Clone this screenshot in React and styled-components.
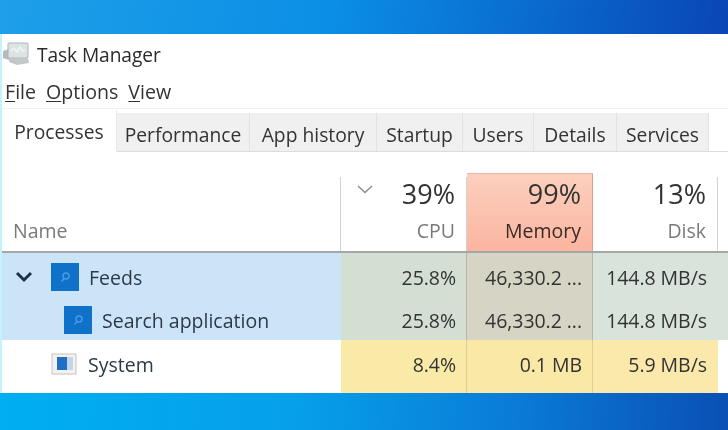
import React from 'react';
import styled, { createGlobalStyle } from 'styled-components';

const GlobalStyle = createGlobalStyle`
  html, body { margin: 0; padding: 0; background: #fff; }
  body { font-family: "Open Sans", "Noto Sans", sans-serif; }
`;

const Page = styled.div`
  width: 728px;
  height: 430px;
  overflow: hidden;
  display: flex;
  flex-direction: column;
`;

const Wallpaper = styled.div`
  height: ${p => p.$h}px;
  flex: none;
  background: ${p => p.$bg};
`;

const Win = styled.div`
  height: 359px;
  flex: none;
  display: flex;
  flex-direction: column;
  background: #fff;
  border-left: 2px solid #c4f3fb;
  box-sizing: border-box;
  color: #262626;
  filter: blur(0.35px);
`;

const TitleBar = styled.div`
  height: 40px;
  display: flex;
  align-items: center;
  gap: 6px;
  padding-left: 1px;
  font-size: 19.2px;
  letter-spacing: -0.1px;
  color: #2b2b2b;
`;

const MenuBar = styled.div`
  height: 35px;
  display: flex;
  align-items: center;
  gap: 10px;
  padding-left: 3px;
  font-size: 19.6px;
  color: #333;
  border-bottom: 1px solid #f1f1f1;
  box-sizing: border-box;
  u { text-underline-offset: 2px; text-decoration-thickness: 1px; }
`;

const TabBar = styled.div`
  height: 43px;
  flex: none;
  display: flex;
  align-items: flex-end;
  box-sizing: border-box;
  border-bottom: 1px solid #dcdcdc;
`;

const Tab = styled.div`
  width: ${p => p.$w}px;
  box-sizing: border-box;
  height: ${p => (p.$active ? 42 : 38)}px;
  display: flex;
  align-items: center;
  justify-content: center;
  font-size: 19.3px;
  padding-top: ${p => (p.$active ? 0 : 4)}px;
  background: ${p => (p.$active ? '#fff' : '#f0f0f0')};
  border-right: 1px solid ${p => (p.$active ? '#e9e9e9' : '#e2e2e2')};
  margin-bottom: ${p => (p.$active ? -1 : 0)}px;
  color: #333;
`;

const Table = styled.div`
  flex: 1;
  display: grid;
  padding-top: 21px;
  grid-template-columns: 339px 126px 126px 125px 10px;
  grid-template-rows: 80px 43px 44px 1fr;
`;

const HeadCell = styled.div`
  position: relative;
  display: flex;
  flex-direction: column;
  align-items: ${p => (p.$left ? 'flex-start' : 'flex-end')};
  justify-content: flex-end;
  box-sizing: border-box;
  padding: 0 ${p => (p.$left ? 0 : 12)}px 7px ${p => (p.$left ? 11 : 0)}px;
  border-bottom: 2px solid #a6a6a6;
  border-top: 1px solid ${p => (p.$hot ? '#e8b6a4' : 'transparent')};
  background: ${p => (p.$hot ? 'linear-gradient(#fcd0be, #fbb5a0)' : '#fff')};

  /* column divider stops short of the top, except on the hot column */
  &::after {
    content: '';
    position: absolute;
    right: 0;
    top: ${p => (p.$hot ? 0 : 3)}px;
    bottom: 0;
    width: 1px;
    background: ${p => (p.$hot ? '#d9a08e' : '#d2d2d2')};
  }
`;

const Percent = styled.div`
  font-size: 27px;
  line-height: 34px;
  color: #333;
`;

const ColName = styled.div`
  font-size: 19.5px;
  line-height: 27px;
  margin-top: 6px;
  color: ${p => (p.$hot ? '#3a2a26' : '#7a7a7a')};
`;

const SortArrow = styled.svg`
  position: absolute;
  left: 16px;
  top: 11px;
  width: 16px;
  height: 9px;
`;

const NameCell = styled.div`
  display: flex;
  align-items: center;
  box-sizing: border-box;
  padding-left: ${p => p.$indent}px;
  padding-top: ${p => p.$pt || 0}px;
  padding-bottom: ${p => p.$pb || 0}px;
  font-size: 19.5px;
  color: #2c3a48;
  background: ${p => (p.$sel ? '#cce4f8' : '#fff')};
`;

const DataCell = styled.div`
  display: flex;
  align-items: center;
  justify-content: flex-end;
  box-sizing: border-box;
  padding-right: 10px;
  padding-top: ${p => p.$pt}px;
  padding-bottom: ${p => p.$pb}px;
  font-size: 19.5px;
  letter-spacing: -0.05px;
  color: #333;
  background: ${p => p.$bg};
  border-right: 1px solid ${p => p.$line};
`;

const Spare = styled.div`
  background: ${p => p.$bg};
  border-bottom: ${p => (p.$head ? '2px solid #a6a6a6' : 'none')};
`;

const Chevron = styled.svg`
  width: 18px;
  height: 12px;
  margin-right: 18px;
  flex: none;
`;

const AppTile = styled.svg`
  width: 28px;
  height: 28px;
  margin-right: 10px;
  flex: none;
`;

const SysIcon = styled.svg`
  width: 26px;
  height: 22px;
  margin-right: 11px;
  flex: none;
`;

const TaskIcon = () => (
  <svg width="28" height="24" viewBox="0 0 28 24">
    <path d="M0 9l6-2v11l-6-2z" fill="#b5bcbc" />
    <rect x="5" y="1" width="20" height="15" rx="1" fill="#dde2e3" stroke="#aeb5b5" />
    <path d="M8 9l3-3 3 4 3-5 3 4 2-1" fill="none" stroke="#f2f5f5" strokeWidth="1.5" />
    <path d="M6 16l19 0 1 5-12 2-8-3z" fill="#c2c8c8" />
  </svg>
);

const SearchTile = () => (
  <AppTile viewBox="0 0 28 28">
    <rect width="28" height="28" fill="#0f72c8" />
    <circle cx="15" cy="13" r="3" fill="none" stroke="#4a9bea" strokeWidth="1.4" />
    <path d="M13 15.5l-2.5 3" stroke="#4a9bea" strokeWidth="1.4" />
  </AppTile>
);

const rowColors = {
  sel: { cpu: '#d4dfd3', mem: '#d6d4c4', disk: '#d8e3dc', line: '#b8b3a2' },
  plain: { cpu: '#faeaa8', mem: '#fae8a6', disk: '#fbe9ac', line: '#e0cd96' }
};

const tabs = [
  ['Performance', 133],
  ['App history', 127],
  ['Startup', 86],
  ['Users', 71],
  ['Details', 83],
  ['Services', 92]
];

const rows = [
  { kind: 'sel', pt: 5, pb: 0, cpu: '25.8%', mem: '46,330.2 ...', disk: '144.8 MB/s' },
  { kind: 'sel', pt: 4, pb: 0, cpu: '25.8%', mem: '46,330.2 ...', disk: '144.8 MB/s' },
  { kind: 'plain', pt: 0, pb: 5, cpu: '8.4%', mem: '0.1 MB', disk: '5.9 MB/s' }
];

const rowNames = [
  <NameCell key="n0" $sel $indent={13} $pt={5}>
    <Chevron viewBox="0 0 18 12">
      <path d="M2 2l7 7 7-7" fill="none" stroke="#1f3347" strokeWidth="3" />
    </Chevron>
    <SearchTile />
    Feeds
  </NameCell>,
  <NameCell key="n1" $sel $indent={62} $pt={4}>
    <SearchTile />
    Search application
  </NameCell>,
  <NameCell key="n2" $indent={49} $pb={5}>
    <SysIcon viewBox="0 0 26 22">
      <rect x="1" y="1" width="24" height="20" fill="#f2f2f2" stroke="#c9c2bb" />
      <rect x="6" y="4" width="10" height="13" fill="#1f70c4" />
      <rect x="16" y="4" width="6" height="13" fill="#c4d6e6" />
    </SysIcon>
    System
  </NameCell>
];

export default function App() {
  return (
    <Page>
      <GlobalStyle />
      <Wallpaper $h={34} $bg="linear-gradient(100deg, #1f9fe8 0%, #0b8fe6 45%, #0a6fd2 70%, #0a45b6 100%)" />
      <Win>
        <TitleBar>
          <TaskIcon />
          Task Manager
        </TitleBar>
        <MenuBar>
          <span><u>F</u>ile</span>
          <span><u>O</u>ptions</span>
          <span><u>V</u>iew</span>
        </MenuBar>
        <TabBar>
          <Tab $active $w={115}>Processes</Tab>
          {tabs.map(([label, w]) => (
            <Tab key={label} $w={w}>{label}</Tab>
          ))}
        </TabBar>
        <Table>
          <HeadCell $left>
            <ColName>Name</ColName>
          </HeadCell>
          <HeadCell>
            <SortArrow viewBox="0 0 16 9">
              <path d="M1 1l7 6.5L15 1" fill="none" stroke="#8a8a8a" strokeWidth="1.3" />
            </SortArrow>
            <Percent>39%</Percent>
            <ColName>CPU</ColName>
          </HeadCell>
          <HeadCell $hot>
            <Percent>99%</Percent>
            <ColName $hot>Memory</ColName>
          </HeadCell>
          <HeadCell>
            <Percent>13%</Percent>
            <ColName>Disk</ColName>
          </HeadCell>
          <Spare $head $bg="#fff" />
          {rows.map((r, i) => {
            const c = rowColors[r.kind];
            return (
              <React.Fragment key={i}>
                {rowNames[i]}
                <DataCell $pt={r.pt} $pb={r.pb} $bg={c.cpu} $line={c.line}>{r.cpu}</DataCell>
                <DataCell $pt={r.pt} $pb={r.pb} $bg={c.mem} $line={c.line}>{r.mem}</DataCell>
                <DataCell $pt={r.pt} $pb={r.pb} $bg={c.disk} $line={c.disk}>{r.disk}</DataCell>
                <Spare $bg={r.kind === 'sel' ? '#d8e3dc' : '#fff'} />
              </React.Fragment>
            );
          })}
        </Table>
      </Win>
      <Wallpaper $h={37} $bg="linear-gradient(95deg, #00aef2 0%, #06a0ea 40%, #0a7cd8 70%, #0a4fb4 100%)" />
    </Page>
  );
}
